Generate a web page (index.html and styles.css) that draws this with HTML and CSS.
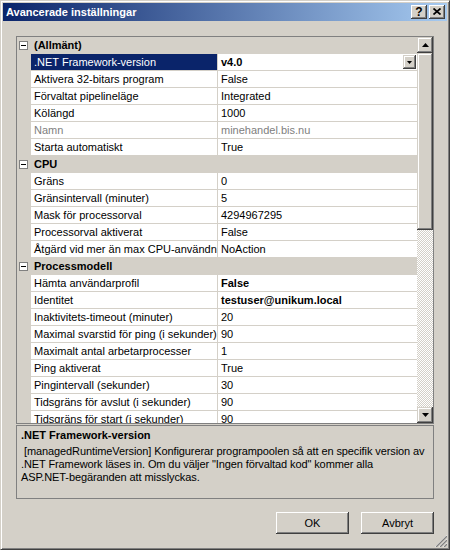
FILE: index.html
```html
<!DOCTYPE html>
<html>
<head>
<meta charset="utf-8">
<link rel="stylesheet" href="styles.css">
</head>
<body>
<div class="window">
  <div class="titlebar">
    <span class="title">Avancerade inställningar</span>
    <div class="caption-buttons">
      <div class="cbtn help">?</div>
      <div class="cbtn close"><svg width="8" height="7" viewBox="0 0 8 7"><path d="M0.5 0.5L7.5 6.5M7.5 0.5L0.5 6.5" stroke="#000" stroke-width="1.7" fill="none"/></svg></div>
    </div>
  </div>
  <div class="client">
    <div class="grid">
      <div class="rows">
        <div class="cat"><span class="minus"></span><span class="cat-label">(Allmänt)</span></div>
        <div class="row sel"><span class="gut"></span><span class="lbl">.NET Framework-version</span><span class="val dd-cell"><span class="vtext bold">v4.0</span><span class="dd"><svg width="5" height="3" viewBox="0 0 5 3"><path d="M0 0H5L2.5 3Z" fill="#000"/></svg></span></span></div>
        <div class="row"><span class="gut"></span><span class="lbl">Aktivera 32-bitars program</span><span class="val">False</span></div>
        <div class="row"><span class="gut"></span><span class="lbl">Förvaltat pipelineläge</span><span class="val">Integrated</span></div>
        <div class="row"><span class="gut"></span><span class="lbl">Kölängd</span><span class="val">1000</span></div>
        <div class="row dis"><span class="gut"></span><span class="lbl">Namn</span><span class="val">minehandel.bis.nu</span></div>
        <div class="row"><span class="gut"></span><span class="lbl">Starta automatiskt</span><span class="val">True</span></div>
        <div class="cat"><span class="minus"></span><span class="cat-label">CPU</span></div>
        <div class="row"><span class="gut"></span><span class="lbl">Gräns</span><span class="val">0</span></div>
        <div class="row"><span class="gut"></span><span class="lbl">Gränsintervall (minuter)</span><span class="val">5</span></div>
        <div class="row"><span class="gut"></span><span class="lbl">Mask för processorval</span><span class="val">4294967295</span></div>
        <div class="row"><span class="gut"></span><span class="lbl">Processorval aktiverat</span><span class="val">False</span></div>
        <div class="row"><span class="gut"></span><span class="lbl">Åtgärd vid mer än max CPU-användning</span><span class="val">NoAction</span></div>
        <div class="cat"><span class="minus"></span><span class="cat-label">Processmodell</span></div>
        <div class="row"><span class="gut"></span><span class="lbl">Hämta användarprofil</span><span class="val bold">False</span></div>
        <div class="row"><span class="gut"></span><span class="lbl">Identitet</span><span class="val bold">testuser@unikum.local</span></div>
        <div class="row"><span class="gut"></span><span class="lbl">Inaktivitets-timeout (minuter)</span><span class="val">20</span></div>
        <div class="row"><span class="gut"></span><span class="lbl">Maximal svarstid för ping (i sekunder)</span><span class="val">90</span></div>
        <div class="row"><span class="gut"></span><span class="lbl">Maximalt antal arbetarprocesser</span><span class="val">1</span></div>
        <div class="row"><span class="gut"></span><span class="lbl">Ping aktiverat</span><span class="val">True</span></div>
        <div class="row"><span class="gut"></span><span class="lbl">Pingintervall (sekunder)</span><span class="val">30</span></div>
        <div class="row"><span class="gut"></span><span class="lbl">Tidsgräns för avslut (i sekunder)</span><span class="val">90</span></div>
        <div class="row"><span class="gut"></span><span class="lbl">Tidsgräns för start (i sekunder)</span><span class="val">90</span></div>
      </div>
      <div class="scrollbar">
        <div class="sb-btn"><svg width="7" height="4" viewBox="0 0 7 4"><path d="M3.5 0L7 4H0Z" fill="#000"/></svg></div>
        <div class="sb-thumb"></div>
        <div class="sb-track"></div>
        <div class="sb-btn"><svg width="7" height="4" viewBox="0 0 7 4"><path d="M0 0H7L3.5 4Z" fill="#000"/></svg></div>
      </div>
    </div>
    <div class="desc">
      <div class="desc-title">.NET Framework-version</div>
      <div class="desc-text">
        <span class="dline">&nbsp;[managedRuntimeVersion] Konfigurerar programpoolen så att en specifik version av</span>
        <span class="dline">.NET Framework läses in. Om du väljer "Ingen förvaltad kod" kommer alla</span>
        <span class="dline">ASP.NET-begäranden att misslyckas.</span>
      </div>
    </div>
    <div class="buttons">
      <div class="btn">OK</div>
      <div class="btn">Avbryt</div>
    </div>
  </div>
  <div class="grip"><svg width="12" height="12" viewBox="0 0 12 12"><path d="M12 0L0 12M12 4L4 12M12 8L8 12" stroke="#fff" stroke-width="1" fill="none"/><path d="M12 1L1 12M12 5L5 12M12 9L9 12" stroke="#808080" stroke-width="1.4" fill="none"/></svg></div>
</div>
</body>
</html>
```

FILE: styles.css
```css
* { box-sizing: border-box; }

body {
  margin: 0;
  font-family: "Liberation Sans", Arial, sans-serif;
  font-size: 11px;
  color: #000;
  background: #d4d0c8;
}

.window {
  position: relative;
  width: 450px;
  height: 550px;
  background: #d4d0c8;
  border: 1px solid;
  border-color: #d4d0c8 #404040 #404040 #d4d0c8;
  padding: 2px;
  box-shadow: inset 1px 1px #fff, inset -1px -1px #808080;
  display: flex;
  flex-direction: column;
}

.titlebar {
  height: 18px;
  background: linear-gradient(to right, #0a246a, #a6caf0);
  display: flex;
  align-items: center;
  padding: 0 2px 0 3px;
}

.title {
  flex: 1;
  color: #fff;
  font-weight: bold;
  line-height: 18px;
}

.caption-buttons {
  display: flex;
  gap: 2px;
}

.cbtn {
  width: 16px;
  height: 14px;
  background: #d4d0c8;
  box-shadow: inset -1px -1px #404040, inset 1px 1px #fff, inset -2px -2px #808080, inset 2px 2px #d4d0c8;
  display: flex;
  align-items: center;
  justify-content: center;
  font-weight: bold;
  font-size: 12px;
  line-height: 14px;
  padding-bottom: 1px;
}

.client {
  flex: 1;
  padding: 15px 0 0 13px;
  display: flex;
  flex-direction: column;
}

.grid {
  width: 418px;
  height: 388px;
  border: 1px solid #808080;
  background: #fff;
  display: flex;
}

.rows {
  width: 400px;
  height: 386px;
  overflow: hidden;
}

.cat {
  height: 17px;
  background: #d4d0c8;
  display: flex;
  align-items: center;
  font-weight: bold;
}

.minus {
  width: 9px;
  height: 9px;
  margin-left: 2px;
  margin-right: 6px;
  border: 1px solid #808080;
  background: #fff;
  position: relative;
}

.minus::after {
  content: "";
  position: absolute;
  left: 1px;
  top: 3px;
  width: 5px;
  height: 1px;
  background: #000;
}

.cat-label {
  line-height: 17px;
}

.row {
  display: grid;
  grid-template-columns: 14px 186px 200px;
  height: 17px;
}

.gut {
  background: #d4d0c8;
}

.lbl {
  padding-left: 3px;
  border-bottom: 1px solid #d4d0c8;
  line-height: 16px;
  white-space: nowrap;
  overflow: hidden;
}

.val {
  padding-left: 3px;
  border-left: 1px solid #d4d0c8;
  border-bottom: 1px solid #d4d0c8;
  line-height: 16px;
  white-space: nowrap;
  overflow: hidden;
}

.bold { font-weight: bold; }

.row.sel .lbl {
  background: #0a246a;
  color: #fff;
}

.row.dis .lbl,
.row.dis .val {
  color: #808080;
}

.dd-cell {
  display: flex;
  align-items: center;
  padding-right: 1px;
}

.vtext { flex: 1; }

.dd {
  width: 13px;
  height: 14px;
  background: #d4d0c8;
  box-shadow: inset -1px -1px #404040, inset 1px 1px #d4d0c8, inset -2px -2px #808080, inset 2px 2px #fff;
  display: flex;
  align-items: center;
  justify-content: center;
}

.dd svg { display: block; }

.scrollbar {
  width: 16px;
  display: flex;
  flex-direction: column;
}

.sb-btn,
.sb-thumb {
  background: #d4d0c8;
  box-shadow: inset -1px -1px #404040, inset 1px 1px #d4d0c8, inset -2px -2px #808080, inset 2px 2px #fff;
}

.sb-btn {
  height: 16px;
  display: flex;
  align-items: center;
  justify-content: center;
}

.sb-btn svg { display: block; }

.sb-thumb {
  height: 177px;
}

.sb-track {
  flex: 1;
  background: repeating-conic-gradient(#fff 0 25%, #d4d0c8 0 50%) 0 0 / 2px 2px;
}

.desc {
  margin-top: 1px;
  width: 418px;
  height: 74px;
  border: 1px solid #808080;
  padding: 3px 4px;
}

.desc-title {
  font-weight: bold;
  line-height: 13px;
  margin-bottom: 3px;
}

.desc-text {
  line-height: 13px;
  letter-spacing: -0.1px;
}

.dline {
  display: block;
  white-space: nowrap;
}

.buttons {
  margin-top: 13px;
  width: 418px;
  display: flex;
  justify-content: flex-end;
  gap: 12px;
}

.btn {
  width: 73px;
  height: 22px;
  background: #d4d0c8;
  box-shadow: inset -1px -1px #404040, inset 1px 1px #fff, inset -2px -2px #808080, inset 2px 2px #d4d0c8;
  display: flex;
  align-items: center;
  justify-content: center;
}

.grip {
  position: absolute;
  right: 2px;
  bottom: 2px;
  width: 12px;
  height: 12px;
}

.grip svg { display: block; }
```
